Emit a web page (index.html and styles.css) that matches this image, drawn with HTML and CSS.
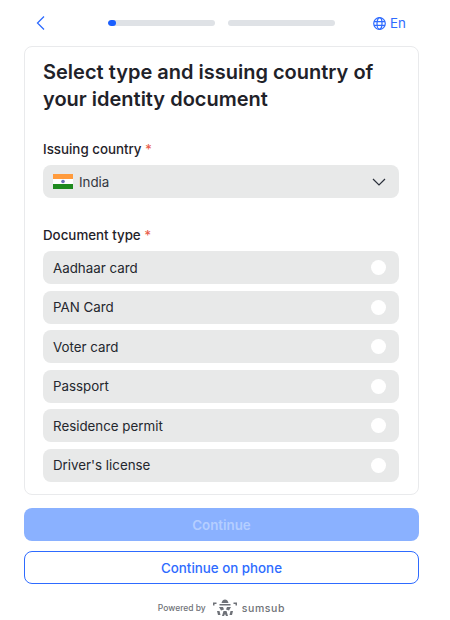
FILE: index.html
```html
<!DOCTYPE html>
<html lang="en">
<head>
  <meta charset="UTF-8">
  <meta name="viewport" content="width=device-width, initial-scale=1.0">
  <title>Select document</title>
  <link rel="stylesheet" href="styles.css">
</head>
<body>
  <div class="page">
    <div class="topbar">
      <svg class="back" width="10" height="16" viewBox="0 0 10 16"><path d="M8 1.500 1.500 8 8 14.500" fill="none" stroke="#2e6bff" stroke-width="1.300"/></svg>
      <div class="steps">
        <div class="step"><div class="step-fill"></div></div>
        <div class="step"></div>
      </div>
      <div class="lang">
        <svg width="13" height="13" viewBox="0 0 13 13" fill="none" stroke="#2e6bff" stroke-width="1.200"><circle cx="6.500" cy="6.500" r="5.800"/><ellipse cx="6.500" cy="6.500" rx="2.500" ry="5.800"/><path d="M1 4.600h11M1 8.400h11"/></svg>
        <span>En</span>
      </div>
    </div>

    <div class="card">
      <h1>Select type and issuing country of your identity document</h1>

      <div class="label label-country">Issuing country <span class="req">*</span></div>
      <div class="select">
        <svg class="flag" width="20" height="15" viewBox="0 0 20 15"><rect width="20" height="5" fill="#ff9b3d"/><rect y="5" width="20" height="5" fill="#fff"/><rect y="10" width="20" height="5" fill="#1f8a1f"/><circle cx="10" cy="7.500" r="1.800" fill="#6a6fb5"/></svg>
        <span class="select-text">India</span>
        <svg class="chevron" width="14" height="8" viewBox="0 0 14 8"><path d="M1 1l6 6 6-6" fill="none" stroke="#2a2f3a" stroke-width="1.200"/></svg>
      </div>

      <div class="label label-doc">Document type <span class="req">*</span></div>
      <div class="options">
        <div class="option">Aadhaar card<span class="radio"></span></div>
        <div class="option">PAN Card<span class="radio"></span></div>
        <div class="option">Voter card<span class="radio"></span></div>
        <div class="option">Passport<span class="radio"></span></div>
        <div class="option">Residence permit<span class="radio"></span></div>
        <div class="option">Driver's license<span class="radio"></span></div>
      </div>
    </div>

    <div class="btn btn-disabled">Continue</div>
    <div class="btn btn-outline">Continue on phone</div>

    <div class="powered">
      <span>Powered by</span>
      <svg width="24" height="18" viewBox="0 0 24 18" fill="#6f7278"><path d="M8.500 4C9 1.500 10.500 0.500 12 0.500s3 1 3.500 3.500z"/><path d="M6.500 5h11v1.500h-11z"/><path d="M0 3.500h3.500V5H1.500v1.500H0zM24 3.500h-3.500V5h2v1.500H24z"/><path d="M6 8h4l1 2.500-3 1zM18 8h-4l-1 2.500 3 1z"/><path d="M4 12h2.500l1 4H5zM20 12h-2.500l-1 4H19zM10.500 12h3l1.500 5h-2l-1-2-1 2H9z"/></svg>
      <span class="brand">sumsub</span>
    </div>
  </div>
</body>
</html>
```

FILE: styles.css
```css
html, body {
  margin: 0;
  height: 620px;
  overflow: hidden;
}
body {
  background-color: #fff;
  font-family: Inter, "Liberation Sans", sans-serif;
  color: #1f2229;
}
.page {
  display: flex;
  flex-direction: column;
  width: 395px;
  margin-left: 24px;
}
.topbar {
  display: flex;
  align-items: center;
  height: 46px;
}
.back {
  margin-left: 12px;
}
.steps {
  display: flex;
  gap: 13px;
  margin-left: 62px;
}
.step {
  width: 107px;
  height: 6px;
  border-radius: 3px;
  background-color: #dfe2e6;
  overflow: hidden;
}
.step-fill {
  width: 8px;
  height: 100%;
  border-radius: 3px;
  background-color: #1a5fff;
}
.lang {
  display: flex;
  align-items: center;
  gap: 4px;
  margin-left: 38px;
  font-size: 13.33px;
  color: #2e6bff;
}
.card {
  box-sizing: border-box;
  height: 449px;
  padding: 12px 18px 0;
  border: 1px solid #e9eaec;
  border-radius: 8px;
}
h1 {
  margin: 0;
  font-size: 20px;
  line-height: 27px;
  font-weight: 600;
}
.label {
  font-size: 13.33px;
  line-height: 18px;
  font-weight: 500;
}
.label-country {
  margin-top: 27px;
}
.label-doc {
  margin-top: 28px;
}
.req {
  color: #e8604c;
}
.select {
  display: flex;
  align-items: center;
  height: 33px;
  margin-top: 7px;
  padding: 0 13px 0 10px;
  margin-right: 1px;
  border-radius: 8px;
  background-color: #e8e9e9;
  font-size: 13.33px;
  color: #33373f;
}
.select-text {
  margin-left: 6px;
  flex: 1;
}
.options {
  display: flex;
  flex-direction: column;
  gap: 6.5px;
  margin-top: 7px;
  margin-right: 1px;
}
.option {
  display: flex;
  align-items: center;
  justify-content: space-between;
  height: 33px;
  padding: 0 13px 0 10px;
  border-radius: 8px;
  background-color: #e8e9e9;
  font-size: 13.33px;
  color: #24272e;
}
.radio {
  width: 15px;
  height: 15px;
  border-radius: 50%;
  background-color: #fff;
}
.btn {
  box-sizing: border-box;
  display: flex;
  align-items: center;
  justify-content: center;
  height: 33px;
  border-radius: 8px;
  font-size: 13.33px;
  font-weight: 500;
}
.btn-disabled {
  margin-top: 13px;
  background-color: #8ab1ff;
  color: #b5ceff;
  font-weight: 600;
}
.btn-outline {
  margin-top: 10px;
  border: 1px solid #2e6bff;
  color: #2e6bff;
}
.powered {
  display: flex;
  align-items: center;
  justify-content: center;
  gap: 6px;
  margin-top: 15px;
  font-size: 8.5px;
  font-weight: 500;
  color: #6f7278;
}
.powered svg {
  margin-left: 1px;
}
.brand {
  margin-left: -1px;
  font-size: 10.5px;
  letter-spacing: 0.6px;
}
```
